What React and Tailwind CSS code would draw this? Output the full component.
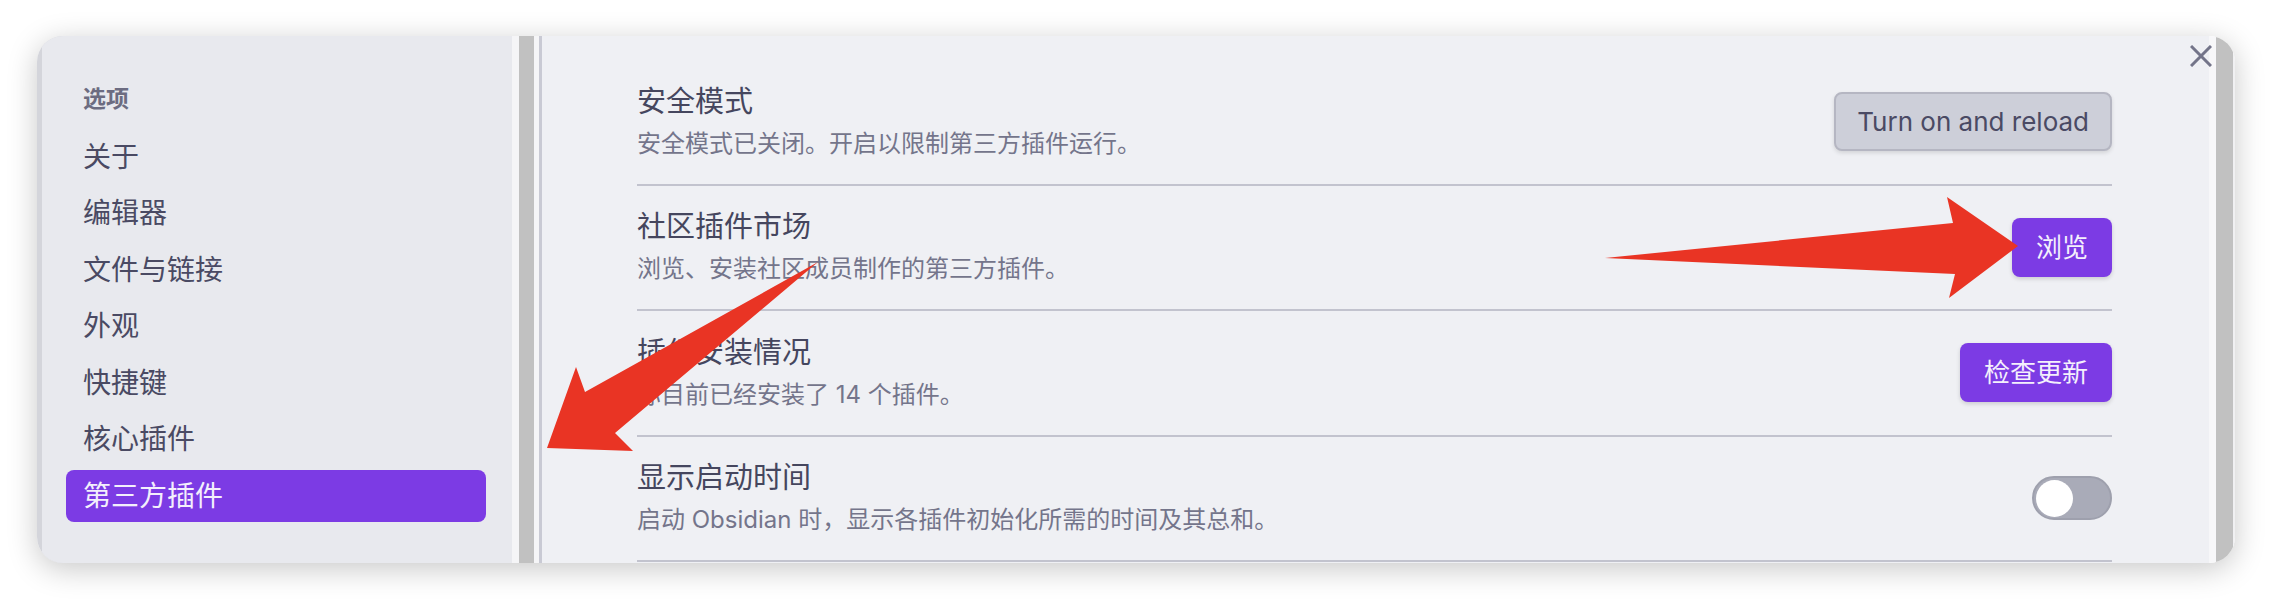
const navItems = ['关于', '编辑器', '文件与链接', '外观', '快捷键', '核心插件', '第三方插件']

function Sidebar() {
  return (
    <div className="flex h-full w-[475px] shrink-0 bg-[#d4d5db] pl-[5px]">
      <div className="h-full w-[470px] bg-[#e8e9ee] pt-[48px] pl-[24px] pr-[26px]">
        <p className="mb-[16.5px] h-[30px] pl-[17px] text-[23px] font-semibold leading-[30px] text-[#6c6c81]">
          选项
        </p>
        <div className="flex flex-col gap-[4.6px]">
          {navItems.map((item) =>
            item === '第三方插件' ? (
              <div
                key={item}
                className="flex h-[52px] items-center rounded-[8px] bg-[#7c3be4] pl-[17px] text-[28px] text-[#f3effc]"
              >
                {item}
              </div>
            ) : (
              <div key={item} className="flex h-[52px] items-center pl-[17px] text-[28px] text-[#4a4a63]">
                {item}
              </div>
            )
          )}
        </div>
      </div>
    </div>
  )
}

function Scrollbar() {
  return (
    <div className="flex h-full shrink-0">
      <div className="w-[7px] bg-[#f5f5f7]" />
      <div className="w-[15px] bg-[#c1c1c1]" />
      <div className="w-[5px] bg-[#f5f5f7]" />
      <div className="w-[3px] bg-[#c9cad4]" />
    </div>
  )
}

function Row({ title, desc, children }) {
  return (
    <div className="flex h-[125.5px] items-center justify-between border-b-2 border-[#c2c3ce]">
      <div>
        <p className="text-[29px] leading-[36px] text-[#45465e]">{title}</p>
        <p className="mt-[8px] text-[24px] leading-[32px] text-[#74758b]">{desc}</p>
      </div>
      {children}
    </div>
  )
}

function PurpleButton({ children }) {
  return (
    <button className="h-[59px] rounded-[8px] bg-[#7c3be4] px-[24px] text-[26px] text-[#f4f0fc] shadow-[0_2px_4px_rgba(0,0,0,0.15)]">
      {children}
    </button>
  )
}

function Toggle() {
  return (
    <div className="flex h-[44px] w-[80px] items-center rounded-full border-2 border-[#9ea0ad] bg-[#a9abb8] pl-[2px]">
      <div className="h-[37px] w-[37px] rounded-full bg-white" />
    </div>
  )
}

function Content() {
  return (
    <div className="relative h-full flex-1 bg-[#eff0f4] pl-[95px] pr-[97px] pt-[24px]">
      <svg
        className="absolute right-[-3px] top-[9px]"
        width="22"
        height="22"
        viewBox="0 0 22 22"
        fill="none"
        stroke="#737489"
        strokeWidth="3"
      >
        <path d="M1 1L21 21M21 1L1 21" />
      </svg>
      <Row title="安全模式" desc="安全模式已关闭。开启以限制第三方插件运行。">
        <button className="h-[59px] rounded-[8px] border-2 border-[#b5b6c2] bg-[#cdcfd9] px-[21px] text-[26px] text-[#4a4a64] shadow-[0_2px_4px_rgba(0,0,0,0.12)]">
          Turn on and reload
        </button>
      </Row>
      <Row title="社区插件市场" desc="浏览、安装社区成员制作的第三方插件。">
        <PurpleButton>浏览</PurpleButton>
      </Row>
      <Row title="插件安装情况" desc="你目前已经安装了 14 个插件。">
        <PurpleButton>检查更新</PurpleButton>
      </Row>
      <Row title="显示启动时间" desc="启动 Obsidian 时，显示各插件初始化所需的时间及其总和。">
        <Toggle />
      </Row>
    </div>
  )
}

export default function App() {
  return (
    <div className="relative h-[600px] w-[2272px] overflow-hidden bg-white pl-[37px] pt-[36px] font-['Inter','Noto_Sans_CJK_SC',sans-serif]">
      <div className="flex h-[527px] w-[2198px] overflow-hidden rounded-[26px] shadow-[0_6px_30px_rgba(0,0,0,0.22)]">
        <Sidebar />
        <Scrollbar />
        <Content />
        <div className="flex h-full shrink-0">
          <div className="w-[7px] bg-[#f7f7f9]" />
          <div className="w-[17px] bg-[#c1c1c1]" />
          <div className="w-[2px] bg-[#f0f0f2]" />
        </div>
      </div>
      <svg className="pointer-events-none absolute left-0 top-0" width="2272" height="600" viewBox="0 0 2272 600">
        <polygon points="1605,258 1953,223 1947,197 2018,246 1949,298 1955,274" fill="#e93424" />
        <polygon points="818,262 585,392 576,367 547,448 633,451 615,433" fill="#e93424" />
      </svg>
    </div>
  )
}
